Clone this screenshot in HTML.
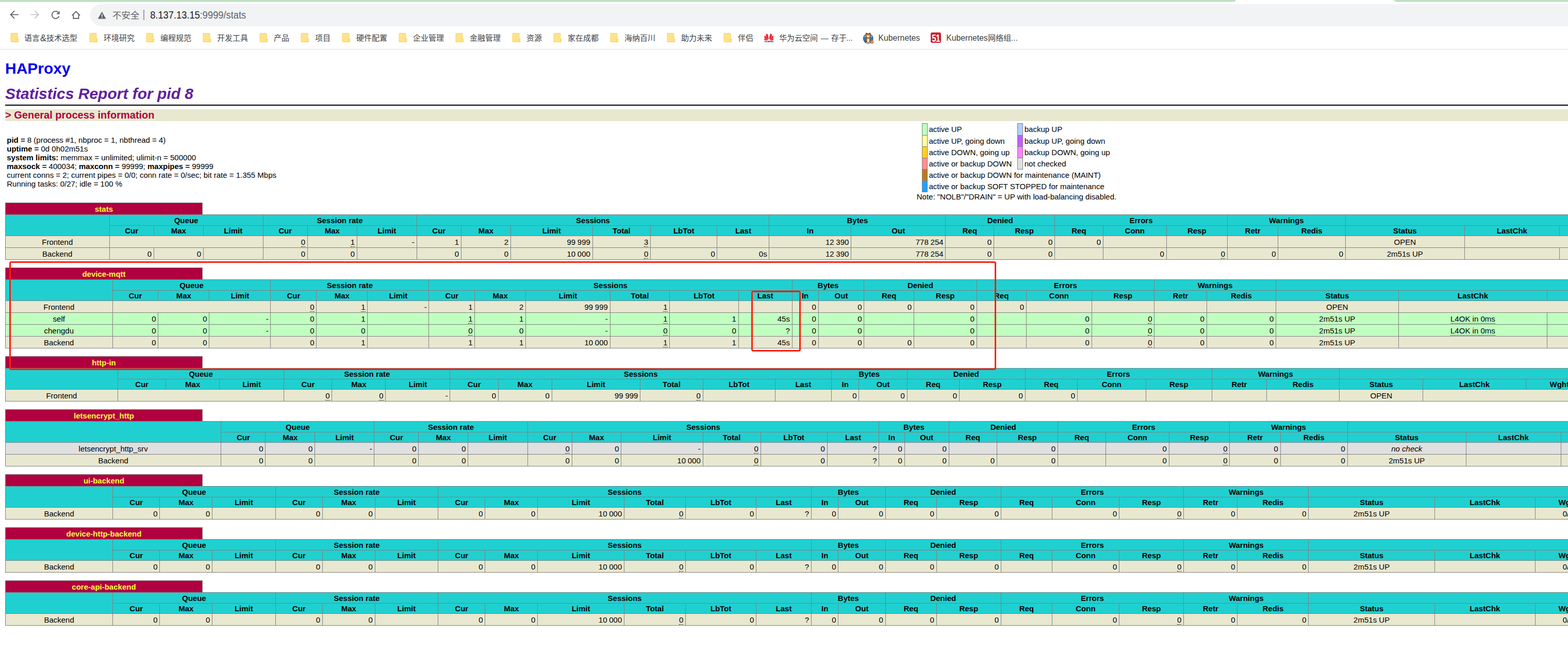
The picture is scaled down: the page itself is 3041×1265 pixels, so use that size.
<!DOCTYPE html>
<html><head><meta charset="utf-8"><title>Statistics Report for HAProxy</title>
<style>
html,body{margin:0;padding:0;background:#fff;overflow:hidden;}
body{width:3041px;height:1265px;position:relative;font-family:"Liberation Sans",sans-serif;}
#vp{position:absolute;left:0;top:96px;width:3041px;height:1169px;overflow:hidden;}
#zoom{zoom:1.25;width:3072px;display:flow-root;font-family:"Liberation Sans",sans-serif;font-size:12px;font-weight:normal;color:black;background:white;}
#pg{margin:8px;}
#pg th,#pg td{font-size:12px;}
#pg h1{font-size:24px;margin-bottom:0.5em;margin-top:0.67em;font-weight:bold;}
#pg h1 a{color:#0000ee;}
#pg h2{font-size:24px;font-weight:bold;font-style:italic;color:#6020a0;margin-top:0;margin-bottom:0;}
#pg h3{font-size:16px;font-weight:bold;color:#b00040;background:#e8e8d0;margin-top:0;margin-bottom:0;}
#pg li{margin-top:0.25em;margin-right:2em;}
#pg .hr{margin-top:0.25em;border-color:black;border-bottom-style:solid;}
.titre{background:#20D0D0;color:#000;font-weight:bold;text-align:center;}
.frontend{background:#e8e8d0;}
.backend{background:#e8e8d0;}
.active_down{background:#ff9090;}
.active_going_up{background:#ffd020;}
.active_going_down{background:#ffffa0;}
.active_up{background:#c0ffc0;}
.active_draining{background:#20a0FF;}
.active_no_check{background:#e0e0e0;}
.backup_going_up{background:#ff80ff;}
.backup_going_down{background:#c060ff;}
.backup_up{background:#b0d0ff;}
.maintain{background:#c07820;}
.rls{letter-spacing:2px;margin-right:1px;}
a.px{color:#ffff40;text-decoration:none;}
a.lfsb{color:#000;text-decoration:none;}
a.lnk{color:#0000ee;text-decoration:underline;}
table.tbl{border-collapse:collapse;border-style:none;}
table.tbl td{text-align:right;border-width:1px;border-style:solid;padding:2px 3px;border-color:gray;white-space:nowrap;}
table.tbl td.ac{text-align:center;}
table.tbl th{border-width:1px;border-style:solid;border-color:gray;}
table.tbl th.pxname{background:#b00040;color:#ffff40;font-weight:bold;border-style:solid solid none solid;padding:2px 3px;white-space:nowrap;}
table.tbl th.empty{border-style:none;empty-cells:hide;background:white;}
table.lgd{border-collapse:collapse;border-width:1px;border-style:none none none solid;border-color:black;}
table.lgd td{border-width:1px;border-style:solid;border-color:gray;padding:2px;}
table.lgd td.noborder{border-style:none;padding:2px;white-space:nowrap;}
u{text-decoration:none;border-bottom:1px dotted black;}
#chrome{position:absolute;left:0;top:0;width:3041px;height:96px;background:#fff;overflow:hidden;}
#chrome .g{position:absolute;overflow:visible;}
#chrome .g text.cj{font-family:"Liberation Sans","Noto Sans CJK SC",sans-serif;font-size:250px;}
.strip{position:absolute;top:-8px;height:10px;background:#c7e8ca;border-bottom:1px solid #98c29f;box-sizing:content-box;}
.pill{position:absolute;left:175px;top:8px;width:3000px;height:43px;border-radius:21.5px;background:#f1f3f4;}
.sep{position:absolute;left:277.9px;top:19px;width:2px;height:19.8px;background:#9b9ea3;}
.url{position:absolute;left:291.2px;top:15px;height:30px;line-height:30px;font-size:18.3px;white-space:nowrap;transform-origin:0 73%;transform:scaleY(1.065);}
.bt{position:absolute;top:62px;height:24px;line-height:24px;font-size:15px;color:#3c4043;white-space:nowrap;}
.bt.lat{font-size:15.75px;}
.bline{position:absolute;left:0;top:95px;width:3041px;height:1px;background:#dcdee1;}
.ann{position:absolute;box-sizing:border-box;border:3px solid #ff1e0e;border-radius:4px;}

</style></head>
<body>
<div id="chrome">
<div class="strip" style="left:0;width:2398px;border-bottom-right-radius:7px"></div>
<div class="strip" style="left:2702px;width:339px;border-bottom-left-radius:7px"></div>
<div class="pill"></div>
<svg class="g" style="left:0;top:0" width="175" height="56" viewBox="0 0 175 56" fill="none" stroke-width="1.9" stroke-linecap="butt" stroke-linejoin="miter"><path stroke="#5f6368" d="M35.8 28.4H21M27.9 21.2L20.7 28.4L27.9 35.6"/><path stroke="#c3c5c8" d="M59.4 28.4H74.2M67.3 21.2L74.5 28.4L67.3 35.6"/><path stroke="#5f6368" d="M114.6 31.2A7.1 7.1 0 1 1 112.6 23.6"/><path fill="#5f6368" stroke="none" d="M115.7 21.1V27.5H109.3Z"/><path stroke="#5f6368" d="M139.7 29.9L147.4 22.3L155.1 29.9M142.3 28.2V35.8H152.5V28.2"/></svg>
<svg class="g" style="left:186px;top:18px" width="24" height="24" viewBox="186 18 24 24"><path fill="#5f6368" d="M197.7 22.7L205.6 36.6H189.8Z"/><rect x="196.9" y="27.4" width="1.7" height="4.7" fill="#f1f3f4"/><rect x="196.9" y="33.2" width="1.7" height="1.7" fill="#f1f3f4"/></svg>
<svg class="g" style="left:217.60px;top:18.95px" width="52.35" height="24.43" viewBox="0 -250 750.0 350" role="img" aria-label="不安全"><text class="cj" x="0" y="0" fill="#5f6368">不安全</text></svg>
<div class="sep"></div>
<div class="url"><span style="color:#202124">8.137.13.15</span><span style="color:#5f6368">:9999/stats</span></div>
<svg class="g" style="left:19.7px;top:63px" width="17" height="20" viewBox="0 0 17 20"><path fill="#ffe28a" stroke="#f8d565" stroke-width="1" d="M2 1.5H13Q14 1.5 14 2.5V12.5H15Q15.8 12.5 15.8 13.3V17.7Q15.8 18.5 15 18.5H2Q1 18.5 1 17.5V2.5Q1 1.5 2 1.5Z"/><path fill="none" stroke="#f8d565" stroke-width="1" d="M13.6 18V13.8Q13.6 12.6 14.6 12.6"/></svg>
<svg class="g" style="left:47.40px;top:64.20px" width="30.00" height="21.00" viewBox="0 -250 500.0 350" role="img" aria-label="语言"><text class="cj" x="0" y="0" fill="#3c4043">语言</text></svg>
<div class="bt" style="left:77.9px;font-size:18px">&amp;</div>
<svg class="g" style="left:90.40px;top:64.20px" width="60.00" height="21.00" viewBox="0 -250 1000.0 350" role="img" aria-label="技术选型"><text class="cj" x="0" y="0" fill="#3c4043">技术选型</text></svg>
<svg class="g" style="left:172.7px;top:63px" width="17" height="20" viewBox="0 0 17 20"><path fill="#ffe28a" stroke="#f8d565" stroke-width="1" d="M2 1.5H13Q14 1.5 14 2.5V12.5H15Q15.8 12.5 15.8 13.3V17.7Q15.8 18.5 15 18.5H2Q1 18.5 1 17.5V2.5Q1 1.5 2 1.5Z"/><path fill="none" stroke="#f8d565" stroke-width="1" d="M13.6 18V13.8Q13.6 12.6 14.6 12.6"/></svg>
<svg class="g" style="left:201.00px;top:64.20px" width="60.00" height="21.00" viewBox="0 -250 1000.0 350" role="img" aria-label="环境研究"><text class="cj" x="0" y="0" fill="#3c4043">环境研究</text></svg>
<svg class="g" style="left:282.7px;top:63px" width="17" height="20" viewBox="0 0 17 20"><path fill="#ffe28a" stroke="#f8d565" stroke-width="1" d="M2 1.5H13Q14 1.5 14 2.5V12.5H15Q15.8 12.5 15.8 13.3V17.7Q15.8 18.5 15 18.5H2Q1 18.5 1 17.5V2.5Q1 1.5 2 1.5Z"/><path fill="none" stroke="#f8d565" stroke-width="1" d="M13.6 18V13.8Q13.6 12.6 14.6 12.6"/></svg>
<svg class="g" style="left:311.00px;top:64.20px" width="60.00" height="21.00" viewBox="0 -250 1000.0 350" role="img" aria-label="编程规范"><text class="cj" x="0" y="0" fill="#3c4043">编程规范</text></svg>
<svg class="g" style="left:392.7px;top:63px" width="17" height="20" viewBox="0 0 17 20"><path fill="#ffe28a" stroke="#f8d565" stroke-width="1" d="M2 1.5H13Q14 1.5 14 2.5V12.5H15Q15.8 12.5 15.8 13.3V17.7Q15.8 18.5 15 18.5H2Q1 18.5 1 17.5V2.5Q1 1.5 2 1.5Z"/><path fill="none" stroke="#f8d565" stroke-width="1" d="M13.6 18V13.8Q13.6 12.6 14.6 12.6"/></svg>
<svg class="g" style="left:421.00px;top:64.20px" width="60.00" height="21.00" viewBox="0 -250 1000.0 350" role="img" aria-label="开发工具"><text class="cj" x="0" y="0" fill="#3c4043">开发工具</text></svg>
<svg class="g" style="left:502.7px;top:63px" width="17" height="20" viewBox="0 0 17 20"><path fill="#ffe28a" stroke="#f8d565" stroke-width="1" d="M2 1.5H13Q14 1.5 14 2.5V12.5H15Q15.8 12.5 15.8 13.3V17.7Q15.8 18.5 15 18.5H2Q1 18.5 1 17.5V2.5Q1 1.5 2 1.5Z"/><path fill="none" stroke="#f8d565" stroke-width="1" d="M13.6 18V13.8Q13.6 12.6 14.6 12.6"/></svg>
<svg class="g" style="left:531.00px;top:64.20px" width="30.00" height="21.00" viewBox="0 -250 500.0 350" role="img" aria-label="产品"><text class="cj" x="0" y="0" fill="#3c4043">产品</text></svg>
<svg class="g" style="left:582.7px;top:63px" width="17" height="20" viewBox="0 0 17 20"><path fill="#ffe28a" stroke="#f8d565" stroke-width="1" d="M2 1.5H13Q14 1.5 14 2.5V12.5H15Q15.8 12.5 15.8 13.3V17.7Q15.8 18.5 15 18.5H2Q1 18.5 1 17.5V2.5Q1 1.5 2 1.5Z"/><path fill="none" stroke="#f8d565" stroke-width="1" d="M13.6 18V13.8Q13.6 12.6 14.6 12.6"/></svg>
<svg class="g" style="left:611.00px;top:64.20px" width="30.00" height="21.00" viewBox="0 -250 500.0 350" role="img" aria-label="项目"><text class="cj" x="0" y="0" fill="#3c4043">项目</text></svg>
<svg class="g" style="left:662.7px;top:63px" width="17" height="20" viewBox="0 0 17 20"><path fill="#ffe28a" stroke="#f8d565" stroke-width="1" d="M2 1.5H13Q14 1.5 14 2.5V12.5H15Q15.8 12.5 15.8 13.3V17.7Q15.8 18.5 15 18.5H2Q1 18.5 1 17.5V2.5Q1 1.5 2 1.5Z"/><path fill="none" stroke="#f8d565" stroke-width="1" d="M13.6 18V13.8Q13.6 12.6 14.6 12.6"/></svg>
<svg class="g" style="left:691.00px;top:64.20px" width="60.00" height="21.00" viewBox="0 -250 1000.0 350" role="img" aria-label="硬件配置"><text class="cj" x="0" y="0" fill="#3c4043">硬件配置</text></svg>
<svg class="g" style="left:772.7px;top:63px" width="17" height="20" viewBox="0 0 17 20"><path fill="#ffe28a" stroke="#f8d565" stroke-width="1" d="M2 1.5H13Q14 1.5 14 2.5V12.5H15Q15.8 12.5 15.8 13.3V17.7Q15.8 18.5 15 18.5H2Q1 18.5 1 17.5V2.5Q1 1.5 2 1.5Z"/><path fill="none" stroke="#f8d565" stroke-width="1" d="M13.6 18V13.8Q13.6 12.6 14.6 12.6"/></svg>
<svg class="g" style="left:801.00px;top:64.20px" width="60.00" height="21.00" viewBox="0 -250 1000.0 350" role="img" aria-label="企业管理"><text class="cj" x="0" y="0" fill="#3c4043">企业管理</text></svg>
<svg class="g" style="left:882.7px;top:63px" width="17" height="20" viewBox="0 0 17 20"><path fill="#ffe28a" stroke="#f8d565" stroke-width="1" d="M2 1.5H13Q14 1.5 14 2.5V12.5H15Q15.8 12.5 15.8 13.3V17.7Q15.8 18.5 15 18.5H2Q1 18.5 1 17.5V2.5Q1 1.5 2 1.5Z"/><path fill="none" stroke="#f8d565" stroke-width="1" d="M13.6 18V13.8Q13.6 12.6 14.6 12.6"/></svg>
<svg class="g" style="left:911.00px;top:64.20px" width="60.00" height="21.00" viewBox="0 -250 1000.0 350" role="img" aria-label="金融管理"><text class="cj" x="0" y="0" fill="#3c4043">金融管理</text></svg>
<svg class="g" style="left:992.7px;top:63px" width="17" height="20" viewBox="0 0 17 20"><path fill="#ffe28a" stroke="#f8d565" stroke-width="1" d="M2 1.5H13Q14 1.5 14 2.5V12.5H15Q15.8 12.5 15.8 13.3V17.7Q15.8 18.5 15 18.5H2Q1 18.5 1 17.5V2.5Q1 1.5 2 1.5Z"/><path fill="none" stroke="#f8d565" stroke-width="1" d="M13.6 18V13.8Q13.6 12.6 14.6 12.6"/></svg>
<svg class="g" style="left:1021.00px;top:64.20px" width="30.00" height="21.00" viewBox="0 -250 500.0 350" role="img" aria-label="资源"><text class="cj" x="0" y="0" fill="#3c4043">资源</text></svg>
<svg class="g" style="left:1072.7px;top:63px" width="17" height="20" viewBox="0 0 17 20"><path fill="#ffe28a" stroke="#f8d565" stroke-width="1" d="M2 1.5H13Q14 1.5 14 2.5V12.5H15Q15.8 12.5 15.8 13.3V17.7Q15.8 18.5 15 18.5H2Q1 18.5 1 17.5V2.5Q1 1.5 2 1.5Z"/><path fill="none" stroke="#f8d565" stroke-width="1" d="M13.6 18V13.8Q13.6 12.6 14.6 12.6"/></svg>
<svg class="g" style="left:1101.00px;top:64.20px" width="60.00" height="21.00" viewBox="0 -250 1000.0 350" role="img" aria-label="家在成都"><text class="cj" x="0" y="0" fill="#3c4043">家在成都</text></svg>
<svg class="g" style="left:1182.7px;top:63px" width="17" height="20" viewBox="0 0 17 20"><path fill="#ffe28a" stroke="#f8d565" stroke-width="1" d="M2 1.5H13Q14 1.5 14 2.5V12.5H15Q15.8 12.5 15.8 13.3V17.7Q15.8 18.5 15 18.5H2Q1 18.5 1 17.5V2.5Q1 1.5 2 1.5Z"/><path fill="none" stroke="#f8d565" stroke-width="1" d="M13.6 18V13.8Q13.6 12.6 14.6 12.6"/></svg>
<svg class="g" style="left:1211.00px;top:64.20px" width="60.00" height="21.00" viewBox="0 -250 1000.0 350" role="img" aria-label="海纳百川"><text class="cj" x="0" y="0" fill="#3c4043">海纳百川</text></svg>
<svg class="g" style="left:1292.7px;top:63px" width="17" height="20" viewBox="0 0 17 20"><path fill="#ffe28a" stroke="#f8d565" stroke-width="1" d="M2 1.5H13Q14 1.5 14 2.5V12.5H15Q15.8 12.5 15.8 13.3V17.7Q15.8 18.5 15 18.5H2Q1 18.5 1 17.5V2.5Q1 1.5 2 1.5Z"/><path fill="none" stroke="#f8d565" stroke-width="1" d="M13.6 18V13.8Q13.6 12.6 14.6 12.6"/></svg>
<svg class="g" style="left:1321.00px;top:64.20px" width="60.00" height="21.00" viewBox="0 -250 1000.0 350" role="img" aria-label="助力未来"><text class="cj" x="0" y="0" fill="#3c4043">助力未来</text></svg>
<svg class="g" style="left:1402.7px;top:63px" width="17" height="20" viewBox="0 0 17 20"><path fill="#ffe28a" stroke="#f8d565" stroke-width="1" d="M2 1.5H13Q14 1.5 14 2.5V12.5H15Q15.8 12.5 15.8 13.3V17.7Q15.8 18.5 15 18.5H2Q1 18.5 1 17.5V2.5Q1 1.5 2 1.5Z"/><path fill="none" stroke="#f8d565" stroke-width="1" d="M13.6 18V13.8Q13.6 12.6 14.6 12.6"/></svg>
<svg class="g" style="left:1431.00px;top:64.20px" width="30.00" height="21.00" viewBox="0 -250 500.0 350" role="img" aria-label="伴侣"><text class="cj" x="0" y="0" fill="#3c4043">伴侣</text></svg>
<svg class="g" style="left:1481px;top:63px" width="20.4" height="20.4" viewBox="0 0 22 22"><g fill="#ee2a3a"><path d="M10.5 14.4C10.6 9.6 9.3 4.6 7.2 2.2C5.2 3.2 4.2 5.3 4.9 7.6C5.7 10.2 8.3 12.9 10.5 14.4Z"/><path d="M11.5 14.4C11.4 9.6 12.7 4.6 14.8 2.2C16.8 3.2 17.8 5.3 17.1 7.6C16.3 10.2 13.7 12.9 11.5 14.4Z"/><path d="M9.9 14.9C8 11.6 4.7 7.9 2.3 6.4C1 8 1 10.2 2.3 11.8C3.9 13.6 7.3 14.7 9.9 14.9Z"/><path d="M12.1 14.9C14 11.6 17.3 7.9 19.7 6.4C21 8 21 10.2 19.7 11.8C18.1 13.6 14.7 14.7 12.1 14.9Z"/><path d="M9.7 15.7C7 14.4 3.2 12.7 0.9 12.6C0.8 14.4 1.9 16 3.7 16.4C5.6 16.8 8.1 16.4 9.7 15.7Z"/><path d="M12.3 15.7C15 14.4 18.8 12.7 21.1 12.6C21.2 14.4 20.1 16 18.3 16.4C16.4 16.8 13.9 16.4 12.3 15.7Z"/></g><text x="11" y="21" text-anchor="middle" font-family="Liberation Sans,sans-serif" font-weight="bold" font-size="4" fill="#333" textLength="19.5" lengthAdjust="spacingAndGlyphs">HUAWEI</text></svg>
<svg class="g" style="left:1511.00px;top:64.20px" width="75.00" height="21.00" viewBox="0 -250 1250.0 350" role="img" aria-label="华为云空间"><text class="cj" x="0" y="0" fill="#3c4043">华为云空间</text></svg>
<div class="bt" style="left:1589.2px;width:20px;text-align:center">&#8212;</div>
<svg class="g" style="left:1612.00px;top:64.20px" width="30.00" height="21.00" viewBox="0 -250 500.0 350" role="img" aria-label="存于"><text class="cj" x="0" y="0" fill="#3c4043">存于</text></svg>
<div class="bt" style="left:1641.0px">...</div>
<svg class="g" style="left:1672px;top:60px" width="24" height="26" viewBox="0 -2 24 26"><circle cx="11.8" cy="12.6" r="9.4" fill="#3a72b0" stroke="#264a7c" stroke-width="1"/><path d="M3.6 10.4A8.4 8.4 0 0 1 20 10.4A12 5.5 0 0 0 3.6 10.4Z" fill="#9cc0e2" opacity=".8"/><path d="M3.2 16.5A9 9 0 0 0 20.4 16.5A14 8 0 0 1 3.2 16.5Z" fill="#1f4f8d" opacity=".7"/><ellipse cx="11.8" cy="15.2" rx="4.1" ry="5.6" fill="#d9741f" stroke="#6b3a12" stroke-width=".6"/><ellipse cx="11.8" cy="16.4" rx="2.1" ry="3.6" fill="#fbead0"/><circle cx="8.6" cy="3.2" r="1.7" fill="#8a4a17"/><circle cx="15" cy="3.2" r="1.7" fill="#8a4a17"/><ellipse cx="11.8" cy="7" rx="4.7" ry="4.3" fill="#c9671b" stroke="#6b3a12" stroke-width=".6"/><ellipse cx="11.8" cy="8.7" rx="2.9" ry="1.9" fill="#fbead0"/><circle cx="10.1" cy="6.2" r=".8" fill="#fff"/><circle cx="13.5" cy="6.2" r=".8" fill="#fff"/><circle cx="10.2" cy="6.3" r=".4" fill="#111"/><circle cx="13.4" cy="6.3" r=".4" fill="#111"/><rect x="8.4" y="20.2" width="2.6" height="1.5" fill="#fff"/><rect x="12.6" y="20.2" width="2.6" height="1.5" fill="#fff"/><circle cx="19.2" cy="19.6" r="2.9" fill="#f28c3e" stroke="#d46a1f" stroke-width=".7"/></svg>
<div class="bt lat" style="left:1703.6px">Kubernetes</div>
<svg class="g" style="left:1804px;top:62px" width="22" height="22" viewBox="0 0 22 22"><rect x="1" y="1" width="20" height="20" rx="2.8" fill="#c9202f"/><text transform="translate(11 18.6) scale(0.74 1.0)" x="0" y="0" text-anchor="middle" font-family="Liberation Sans,sans-serif" font-weight="bold" font-size="20.2" fill="#fff" letter-spacing="-0.6">51</text></svg>
<div class="bt lat" style="left:1835.2px">Kubernetes</div>
<svg class="g" style="left:1915.60px;top:64.20px" width="45.00" height="21.00" viewBox="0 -250 750.0 350" role="img" aria-label="网络组"><text class="cj" x="0" y="0" fill="#3c4043">网络组</text></svg>
<div class="bt" style="left:1961.1px">...</div>
<div class="bline"></div>
</div>

<div id="vp"><div id="zoom"><div id="pg">
<h1><a style="text-decoration: none;">HAProxy</a></h1>
<h2>Statistics Report for pid 8</h2>
<hr width="100%" class="hr">
<h3>&gt; General process information</h3>
<table border=0><tr><td align="left" nowrap width="1%">
<p><b>pid = </b> 8 (process #1, nbproc = 1, nbthread = 4)<br>
<b>uptime = </b> 0d 0h02m51s<br>
<b>system limits:</b> memmax = unlimited; ulimit-n = 500000<br>
<b>maxsock = </b> 400034; <b>maxconn = </b> 99999; <b>maxpipes = </b> 99999<br>
current conns = 2; current pipes = 0/0; conn rate = 0/sec; bit rate = 1.355 Mbps<br>
Running tasks: 0/27; idle = 100 %<br>
</td><td align="center" nowrap style="padding-left:7.4px">
<table class="lgd"><tr>
<td class="active_up">&nbsp;</td><td class="noborder">active UP </td><td class="backup_up">&nbsp;</td><td class="noborder">backup UP </td>
</tr><tr>
<td class="active_going_down"></td><td class="noborder">active UP, going down </td><td class="backup_going_down"></td><td class="noborder">backup UP, going down </td>
</tr><tr>
<td class="active_going_up"></td><td class="noborder">active DOWN, going up </td><td class="backup_going_up"></td><td class="noborder">backup DOWN, going up </td>
</tr><tr>
<td class="active_down"></td><td class="noborder">active or backup DOWN &nbsp;</td><td class="active_no_check"></td><td class="noborder">not checked </td>
</tr><tr>
<td class="maintain"></td><td class="noborder" colspan="3">active or backup DOWN for maintenance (MAINT) &nbsp;</td>
</tr><tr>
<td class="active_draining"></td><td class="noborder" colspan="3">active or backup SOFT STOPPED for maintenance &nbsp;</td>
</tr></table>
Note: "NOLB"/"DRAIN" = UP with load-balancing disabled.</td>
<td align="left" valign="top" nowrap width="1%"><div style="width:196.04px;height:1px"></div></td>
<td align="left" valign="top" nowrap width="1%"><div style="width:142.71px;height:1px"></div></td></tr></table>

<table class="tbl" width="100%">
<tr class="titre"><th class="pxname" width="10%"><a class=px>stats</a></th><th class="empty" width="90%"></th></tr>
</table>
<table class="tbl" width="100%">
<tr class="titre"><th rowspan=2></th><th colspan=3>Queue</th><th colspan=3>Session rate</th><th colspan=6>Sessions</th><th colspan=2>Bytes</th><th colspan=2>Denied</th><th colspan=3>Errors</th><th colspan=2>Warnings</th><th colspan=9>Server</th></tr>
<tr class="titre"><th>Cur</th><th>Max</th><th>Limit</th><th>Cur</th><th>Max</th><th>Limit</th><th>Cur</th><th>Max</th><th>Limit</th><th>Total</th><th>LbTot</th><th>Last</th><th>In</th><th>Out</th><th>Req</th><th>Resp</th><th>Req</th><th>Conn</th><th>Resp</th><th>Retr</th><th>Redis</th><th>Status</th><th>LastChk</th><th>Wght</th><th>Act</th><th>Bck</th><th>Chk</th><th>Dwn</th><th>Dwntme</th><th>Thrtle</th></tr>
<tr class="frontend"><td class=ac><a class=lfsb>Frontend</a></td><td colspan=3></td><td><u>0</u></td><td><u>1</u></td><td>-</td><td>1</td><td>2</td><td>9<span class="rls">9</span>999</td><td><u>3</u></td><td></td><td></td><td>1<span class="rls">2</span>390</td><td>77<span class="rls">8</span>254</td><td>0</td><td>0</td><td>0</td><td></td><td></td><td></td><td></td><td class=ac>OPEN</td><td class=ac colspan=8></td></tr>
<tr class="backend"><td class=ac><a class=lfsb>Backend</a></td><td>0</td><td>0</td><td></td><td>0</td><td>0</td><td></td><td>0</td><td>0</td><td>1<span class="rls">0</span>000</td><td><u>0</u></td><td>0</td><td>0s</td><td>1<span class="rls">2</span>390</td><td>77<span class="rls">8</span>254</td><td>0</td><td>0</td><td></td><td>0</td><td><u>0</u></td><td>0</td><td>0</td><td class=ac>2m51s UP</td><td class=ac>&nbsp;</td><td class=ac>0/0</td><td class=ac>0</td><td class=ac>0</td><td class=ac>&nbsp;</td><td>0</td><td>&nbsp;</td><td></td></tr>
</table><p>
<table class="tbl" width="100%">
<tr class="titre"><th class="pxname" width="10%"><a class=px>device-mqtt</a></th><th class="empty" width="90%"></th></tr>
</table>
<table class="tbl" width="100%">
<tr class="titre"><th rowspan=2></th><th colspan=3>Queue</th><th colspan=3>Session rate</th><th colspan=6>Sessions</th><th colspan=2>Bytes</th><th colspan=2>Denied</th><th colspan=3>Errors</th><th colspan=2>Warnings</th><th colspan=9>Server</th></tr>
<tr class="titre"><th>Cur</th><th>Max</th><th>Limit</th><th>Cur</th><th>Max</th><th>Limit</th><th>Cur</th><th>Max</th><th>Limit</th><th>Total</th><th>LbTot</th><th>Last</th><th>In</th><th>Out</th><th>Req</th><th>Resp</th><th>Req</th><th>Conn</th><th>Resp</th><th>Retr</th><th>Redis</th><th>Status</th><th>LastChk</th><th>Wght</th><th>Act</th><th>Bck</th><th>Chk</th><th>Dwn</th><th>Dwntme</th><th>Thrtle</th></tr>
<tr class="frontend"><td class=ac><a class=lfsb>Frontend</a></td><td colspan=3></td><td><u>0</u></td><td><u>1</u></td><td>-</td><td>1</td><td>2</td><td>9<span class="rls">9</span>999</td><td><u>1</u></td><td></td><td></td><td>0</td><td>0</td><td>0</td><td>0</td><td>0</td><td></td><td></td><td></td><td></td><td class=ac>OPEN</td><td class=ac colspan=8></td></tr>
<tr class="active_up"><td class=ac><a class=lfsb>self</a></td><td>0</td><td>0</td><td>-</td><td>0</td><td>1</td><td></td><td><u>1</u></td><td>1</td><td>-</td><td><u>1</u></td><td>1</td><td>45s</td><td>0</td><td>0</td><td></td><td>0</td><td></td><td>0</td><td><u>0</u></td><td>0</td><td>0</td><td class=ac>2m51s UP</td><td class=ac><u>L4OK in 0ms</u></td><td class=ac>1/1</td><td class=ac>Y</td><td class=ac>-</td><td><u>0</u></td><td>0</td><td>0s</td><td class=ac>-</td></tr>
<tr class="active_up"><td class=ac><a class=lfsb>chengdu</a></td><td>0</td><td>0</td><td>-</td><td>0</td><td>0</td><td></td><td><u>0</u></td><td>0</td><td>-</td><td><u>0</u></td><td>0</td><td>?</td><td>0</td><td>0</td><td></td><td>0</td><td></td><td>0</td><td><u>0</u></td><td>0</td><td>0</td><td class=ac>2m51s UP</td><td class=ac><u>L4OK in 0ms</u></td><td class=ac>1/1</td><td class=ac>Y</td><td class=ac>-</td><td><u>0</u></td><td>0</td><td>0s</td><td class=ac>-</td></tr>
<tr class="backend"><td class=ac><a class=lfsb>Backend</a></td><td>0</td><td>0</td><td></td><td>0</td><td>1</td><td></td><td>1</td><td>1</td><td>1<span class="rls">0</span>000</td><td><u>1</u></td><td>1</td><td>45s</td><td>0</td><td>0</td><td>0</td><td>0</td><td></td><td>0</td><td><u>0</u></td><td>0</td><td>0</td><td class=ac>2m51s UP</td><td class=ac>&nbsp;</td><td class=ac>2/2</td><td class=ac>2</td><td class=ac>0</td><td class=ac>&nbsp;</td><td>0</td><td>0s</td><td></td></tr>
</table><p>
<table class="tbl" width="100%">
<tr class="titre"><th class="pxname" width="10%"><a class=px>http-in</a></th><th class="empty" width="90%"></th></tr>
</table>
<table class="tbl" width="100%">
<tr class="titre"><th rowspan=2></th><th colspan=3>Queue</th><th colspan=3>Session rate</th><th colspan=6>Sessions</th><th colspan=2>Bytes</th><th colspan=2>Denied</th><th colspan=3>Errors</th><th colspan=2>Warnings</th><th colspan=9>Server</th></tr>
<tr class="titre"><th>Cur</th><th>Max</th><th>Limit</th><th>Cur</th><th>Max</th><th>Limit</th><th>Cur</th><th>Max</th><th>Limit</th><th>Total</th><th>LbTot</th><th>Last</th><th>In</th><th>Out</th><th>Req</th><th>Resp</th><th>Req</th><th>Conn</th><th>Resp</th><th>Retr</th><th>Redis</th><th>Status</th><th>LastChk</th><th>Wght</th><th>Act</th><th>Bck</th><th>Chk</th><th>Dwn</th><th>Dwntme</th><th>Thrtle</th></tr>
<tr class="frontend"><td class=ac><a class=lfsb>Frontend</a></td><td colspan=3></td><td><u>0</u></td><td><u>0</u></td><td>-</td><td>0</td><td>0</td><td>9<span class="rls">9</span>999</td><td><u>0</u></td><td></td><td></td><td>0</td><td>0</td><td>0</td><td>0</td><td>0</td><td></td><td></td><td></td><td></td><td class=ac>OPEN</td><td class=ac colspan=8></td></tr>
</table><p>
<table class="tbl" width="100%">
<tr class="titre"><th class="pxname" width="10%"><a class=px>letsencrypt_http</a></th><th class="empty" width="90%"></th></tr>
</table>
<table class="tbl" width="100%">
<tr class="titre"><th rowspan=2></th><th colspan=3>Queue</th><th colspan=3>Session rate</th><th colspan=6>Sessions</th><th colspan=2>Bytes</th><th colspan=2>Denied</th><th colspan=3>Errors</th><th colspan=2>Warnings</th><th colspan=9>Server</th></tr>
<tr class="titre"><th>Cur</th><th>Max</th><th>Limit</th><th>Cur</th><th>Max</th><th>Limit</th><th>Cur</th><th>Max</th><th>Limit</th><th>Total</th><th>LbTot</th><th>Last</th><th>In</th><th>Out</th><th>Req</th><th>Resp</th><th>Req</th><th>Conn</th><th>Resp</th><th>Retr</th><th>Redis</th><th>Status</th><th>LastChk</th><th>Wght</th><th>Act</th><th>Bck</th><th>Chk</th><th>Dwn</th><th>Dwntme</th><th>Thrtle</th></tr>
<tr class="active_no_check"><td class=ac><a class=lfsb>letsencrypt_http_srv</a></td><td>0</td><td>0</td><td>-</td><td>0</td><td>0</td><td></td><td><u>0</u></td><td>0</td><td>-</td><td><u>0</u></td><td>0</td><td>?</td><td>0</td><td>0</td><td></td><td>0</td><td></td><td>0</td><td><u>0</u></td><td>0</td><td>0</td><td class=ac><i>no check</i></td><td class=ac></td><td class=ac>1/1</td><td class=ac>Y</td><td class=ac>-</td><td colspan=3></td><td class=ac>-</td></tr>
<tr class="backend"><td class=ac><a class=lfsb>Backend</a></td><td>0</td><td>0</td><td></td><td>0</td><td>0</td><td></td><td>0</td><td>0</td><td>1<span class="rls">0</span>000</td><td><u>0</u></td><td>0</td><td>?</td><td>0</td><td>0</td><td>0</td><td>0</td><td></td><td>0</td><td><u>0</u></td><td>0</td><td>0</td><td class=ac>2m51s UP</td><td class=ac>&nbsp;</td><td class=ac>1/1</td><td class=ac>1</td><td class=ac>0</td><td class=ac>&nbsp;</td><td>0</td><td>0s</td><td></td></tr>
</table><p>
<table class="tbl" width="100%">
<tr class="titre"><th class="pxname" width="10%"><a class=px>ui-backend</a></th><th class="empty" width="90%"></th></tr>
</table>
<table class="tbl" width="100%">
<tr class="titre"><th rowspan=2></th><th colspan=3>Queue</th><th colspan=3>Session rate</th><th colspan=6>Sessions</th><th colspan=2>Bytes</th><th colspan=2>Denied</th><th colspan=3>Errors</th><th colspan=2>Warnings</th><th colspan=9>Server</th></tr>
<tr class="titre"><th>Cur</th><th>Max</th><th>Limit</th><th>Cur</th><th>Max</th><th>Limit</th><th>Cur</th><th>Max</th><th>Limit</th><th>Total</th><th>LbTot</th><th>Last</th><th>In</th><th>Out</th><th>Req</th><th>Resp</th><th>Req</th><th>Conn</th><th>Resp</th><th>Retr</th><th>Redis</th><th>Status</th><th>LastChk</th><th>Wght</th><th>Act</th><th>Bck</th><th>Chk</th><th>Dwn</th><th>Dwntme</th><th>Thrtle</th></tr>
<tr class="backend"><td class=ac><a class=lfsb>Backend</a></td><td>0</td><td>0</td><td></td><td>0</td><td>0</td><td></td><td>0</td><td>0</td><td>1<span class="rls">0</span>000</td><td><u>0</u></td><td>0</td><td>?</td><td>0</td><td>0</td><td>0</td><td>0</td><td></td><td>0</td><td><u>0</u></td><td>0</td><td>0</td><td class=ac>2m51s UP</td><td class=ac>&nbsp;</td><td class=ac>0/0</td><td class=ac>0</td><td class=ac>0</td><td class=ac>&nbsp;</td><td>0</td><td>&nbsp;</td><td></td></tr>
</table><p>
<table class="tbl" width="100%">
<tr class="titre"><th class="pxname" width="10%"><a class=px>device-http-backend</a></th><th class="empty" width="90%"></th></tr>
</table>
<table class="tbl" width="100%">
<tr class="titre"><th rowspan=2></th><th colspan=3>Queue</th><th colspan=3>Session rate</th><th colspan=6>Sessions</th><th colspan=2>Bytes</th><th colspan=2>Denied</th><th colspan=3>Errors</th><th colspan=2>Warnings</th><th colspan=9>Server</th></tr>
<tr class="titre"><th>Cur</th><th>Max</th><th>Limit</th><th>Cur</th><th>Max</th><th>Limit</th><th>Cur</th><th>Max</th><th>Limit</th><th>Total</th><th>LbTot</th><th>Last</th><th>In</th><th>Out</th><th>Req</th><th>Resp</th><th>Req</th><th>Conn</th><th>Resp</th><th>Retr</th><th>Redis</th><th>Status</th><th>LastChk</th><th>Wght</th><th>Act</th><th>Bck</th><th>Chk</th><th>Dwn</th><th>Dwntme</th><th>Thrtle</th></tr>
<tr class="backend"><td class=ac><a class=lfsb>Backend</a></td><td>0</td><td>0</td><td></td><td>0</td><td>0</td><td></td><td>0</td><td>0</td><td>1<span class="rls">0</span>000</td><td><u>0</u></td><td>0</td><td>?</td><td>0</td><td>0</td><td>0</td><td>0</td><td></td><td>0</td><td><u>0</u></td><td>0</td><td>0</td><td class=ac>2m51s UP</td><td class=ac>&nbsp;</td><td class=ac>0/0</td><td class=ac>0</td><td class=ac>0</td><td class=ac>&nbsp;</td><td>0</td><td>&nbsp;</td><td></td></tr>
</table><p>
<table class="tbl" width="100%">
<tr class="titre"><th class="pxname" width="10%"><a class=px>core-api-backend</a></th><th class="empty" width="90%"></th></tr>
</table>
<table class="tbl" width="100%">
<tr class="titre"><th rowspan=2></th><th colspan=3>Queue</th><th colspan=3>Session rate</th><th colspan=6>Sessions</th><th colspan=2>Bytes</th><th colspan=2>Denied</th><th colspan=3>Errors</th><th colspan=2>Warnings</th><th colspan=9>Server</th></tr>
<tr class="titre"><th>Cur</th><th>Max</th><th>Limit</th><th>Cur</th><th>Max</th><th>Limit</th><th>Cur</th><th>Max</th><th>Limit</th><th>Total</th><th>LbTot</th><th>Last</th><th>In</th><th>Out</th><th>Req</th><th>Resp</th><th>Req</th><th>Conn</th><th>Resp</th><th>Retr</th><th>Redis</th><th>Status</th><th>LastChk</th><th>Wght</th><th>Act</th><th>Bck</th><th>Chk</th><th>Dwn</th><th>Dwntme</th><th>Thrtle</th></tr>
<tr class="backend"><td class=ac><a class=lfsb>Backend</a></td><td>0</td><td>0</td><td></td><td>0</td><td>0</td><td></td><td>0</td><td>0</td><td>1<span class="rls">0</span>000</td><td><u>0</u></td><td>0</td><td>?</td><td>0</td><td>0</td><td>0</td><td>0</td><td></td><td>0</td><td><u>0</u></td><td>0</td><td>0</td><td class=ac>2m51s UP</td><td class=ac>&nbsp;</td><td class=ac>0/0</td><td class=ac>0</td><td class=ac>0</td><td class=ac>&nbsp;</td><td>0</td><td>&nbsp;</td><td></td></tr>
</table><p>

</div></div></div>
<div class="ann" style="left:18px;top:507px;width:1914px;height:211px"></div>
<div class="ann" style="left:1457px;top:564px;width:96px;height:118px"></div>

</body></html>
